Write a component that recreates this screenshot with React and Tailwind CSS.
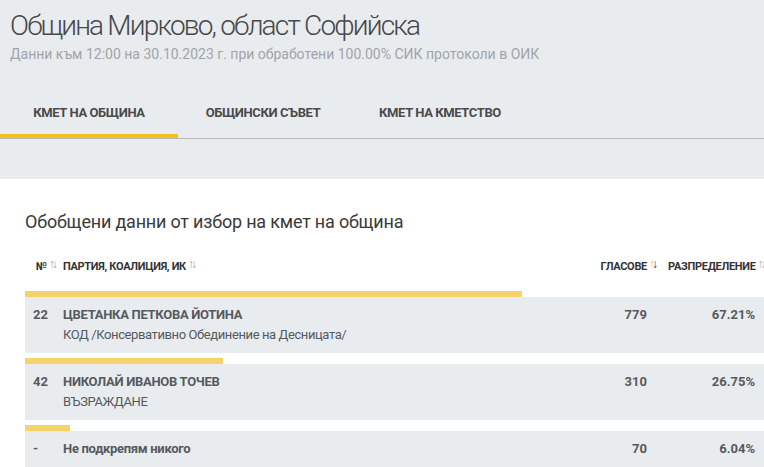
const ROWS = [
  { no: "22", name: "ЦВЕТАНКА ПЕТКОВА ЙОТИНА", party: "КОД /Консервативно Обединение на Десницата/", votes: 779, pct: 67.21 },
  { no: "42", name: "НИКОЛАЙ ИВАНОВ ТОЧЕВ", party: "ВЪЗРАЖДАНЕ", votes: 310, pct: 26.75 },
  { no: "-", name: "Не подкрепям никого", party: "", votes: 70, pct: 6.04 },
];

const TABS = [
  { label: "КМЕТ НА ОБЩИНА", w: "w-[178px]" },
  { label: "ОБЩИНСКИ СЪВЕТ", w: "w-[170px]" },
  { label: "КМЕТ НА КМЕТСТВО", w: "w-[184px]" },
];

function SortArrows({ up }) {
  return (
    <span className="ml-[2px] inline-flex text-[12px] leading-none tracking-[-3px] font-bold align-[2px]">
      <span className={up ? "text-[#f0c020]" : "text-[#a0a0a0]"}>↑</span>
      <span className={up ? "text-[#333]" : "text-[#a0a0a0]"}>↓</span>
    </span>
  );
}

export default function App() {
  return (
    <div className="w-[764px] h-[467px] overflow-hidden bg-white font-['Roboto',sans-serif]">
      {/* Header */}
      <div className="bg-[#e9ecef] h-[179px]">
        <div className="px-[10px] pt-[8px]">
          <h1 className="text-[28px] font-light text-[#484848] leading-[36px] tracking-[-1.8px]">
            Община Мирково, област Софийска
          </h1>
          <p className="text-[14px] text-[#a0a4a8] leading-[20px]">
            Данни към 12:00 на 30.10.2023 г. при обработени 100.00% СИК протоколи в ОИК
          </p>
        </div>
        <div className="mt-[28px] flex border-b border-[#b8bcc0]">
          {TABS.map((t, i) => (
            <div
              key={t.label}
              className={`${t.w} h-[46px] flex items-center justify-center text-[13px] font-bold text-[#4a4a4a] tracking-[-0.4px] border-b-[4px] ${
                i === 0 ? "border-[#f4c020]" : "border-transparent"
              }`}
            >
              {t.label}
            </div>
          ))}
        </div>
      </div>

      {/* Body */}
      <div className="pl-[25px] pt-[31px]">
        <h2 className="text-[18px] text-[#3a3a3a] leading-[24px] tracking-[-0.2px]">
          Обобщени данни от избор на кмет на община
        </h2>
        <div className="mt-[21px] h-[24px] flex items-center text-[11px] font-bold text-[#333] tracking-[-0.3px] whitespace-nowrap">
          <div className="w-[38px] pl-[11px]">№<SortArrows /></div>
          <div className="flex-1">ПАРТИЯ, КОАЛИЦИЯ, ИК<SortArrows /></div>
          <div className="w-[80px] text-right pr-[4px]">ГЛАСОВЕ<SortArrows up /></div>
          <div className="w-[105px] pl-[9px]">РАЗПРЕДЕЛЕНИЕ<SortArrows /></div>
        </div>
        <div className="mt-[12px] flex flex-col gap-[5px]">
          {ROWS.map((r) => (
            <div key={r.no}>
              <div className="h-[6px] bg-[#f7d266]" style={{ width: `${r.pct}%` }} />
              <div className="bg-[#e9ecef] h-[56px] flex text-[#555a5e]">
                <div className="w-[38px] pl-[8px] pt-[9px] text-[13px] font-bold leading-[18px]">{r.no}</div>
                <div className="flex-1 pt-[9px]">
                  <div className="text-[13px] font-bold leading-[18px] tracking-[-0.3px]">{r.name}</div>
                  {r.party && (
                    <div className="text-[13px] leading-[18px] mt-[2px] tracking-[-0.4px]">{r.party}</div>
                  )}
                </div>
                <div className="w-[80px] pt-[9px] pr-[12px] text-right text-[13px] font-bold leading-[18px]">{r.votes}</div>
                <div className="w-[105px] pt-[9px] pr-[9px] text-right text-[13px] font-bold leading-[18px]">
                  {r.pct.toFixed(2)}%
                </div>
              </div>
            </div>
          ))}
        </div>
      </div>
    </div>
  );
}
